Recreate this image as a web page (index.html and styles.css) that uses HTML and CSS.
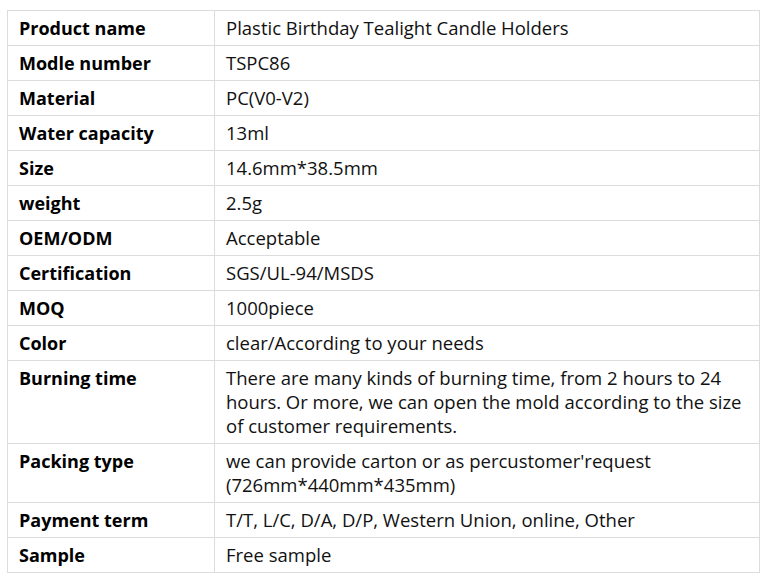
FILE: index.html
```html
<!DOCTYPE html>
<html>
<head>
<meta charset="utf-8">
<link rel="stylesheet" href="styles.css">
</head>
<body>
<table class="spec">
  <tr><td class="k">Product name</td><td class="v">Plastic Birthday Tealight Candle Holders</td></tr>
  <tr><td class="k">Modle number</td><td class="v">TSPC86</td></tr>
  <tr><td class="k">Material</td><td class="v">PC(V0-V2)</td></tr>
  <tr><td class="k">Water capacity</td><td class="v">13ml</td></tr>
  <tr><td class="k">Size</td><td class="v">14.6mm*38.5mm</td></tr>
  <tr><td class="k">weight</td><td class="v">2.5g</td></tr>
  <tr><td class="k">OEM/ODM</td><td class="v">Acceptable</td></tr>
  <tr><td class="k">Certification</td><td class="v">SGS/UL-94/MSDS</td></tr>
  <tr><td class="k">MOQ</td><td class="v">1000piece</td></tr>
  <tr><td class="k">Color</td><td class="v">clear/According to your needs</td></tr>
  <tr><td class="k">Burning time</td><td class="v">There are many kinds of burning time, from 2 hours to 24 hours. Or more, we can open the mold according to the size of customer requirements.</td></tr>
  <tr><td class="k">Packing type</td><td class="v">we can provide carton or as percustomer'request (726mm*440mm*435mm)</td></tr>
  <tr><td class="k">Payment term</td><td class="v">T/T, L/C, D/A, D/P, Western Union, online, Other</td></tr>
  <tr><td class="k">Sample</td><td class="v">Free sample</td></tr>
</table>
</body>
</html>
```
FILE: styles.css
```css
html, body {
  margin: 0;
  padding: 0;
  background: #fff;
}
body {
  padding: 10px 0 0 7px;
  font-family: "Open Sans", "Noto Sans", sans-serif;
  font-size: 18.5px;
  color: #111;
}
.spec {
  border-collapse: collapse;
  width: 753px;
  table-layout: fixed;
}
.spec td {
  border: 1px solid #dcdcdc;
  padding: 5px 11px 5px 11px;
  line-height: 24px;
  vertical-align: top;
}
.spec .k {
  width: 184px;
  font-size: 18px;
  font-weight: 700;
  color: #000;
}
.spec .v {
  padding-right: 10px;
}
```
